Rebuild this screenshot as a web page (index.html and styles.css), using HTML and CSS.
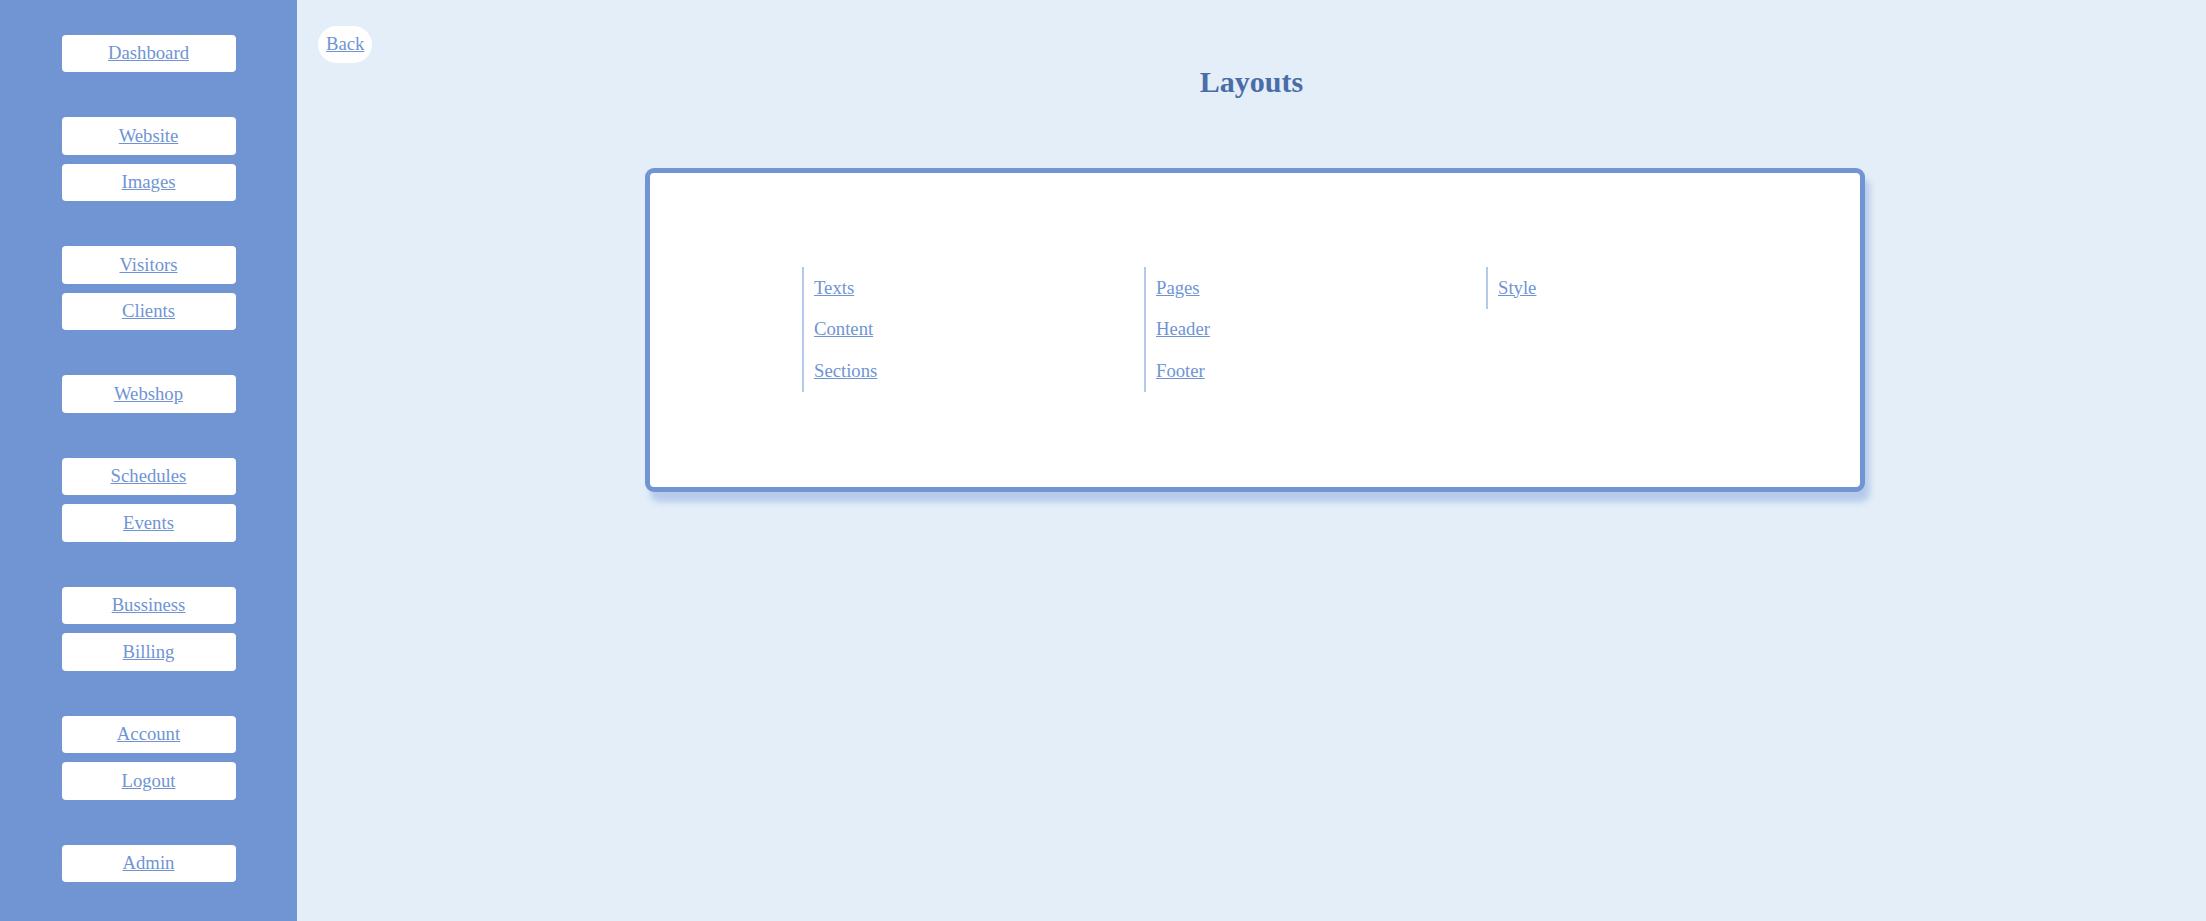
FILE: index.html
```html
<!DOCTYPE html>
<html lang="en">
<head>
<meta charset="utf-8">
<title>Layouts</title>
<link rel="stylesheet" href="styles.css">
</head>
<body>
<nav class="sidebar">
  <div class="group"><a class="nav-btn" href="#">Dashboard</a></div>
  <div class="group"><a class="nav-btn" href="#">Website</a><a class="nav-btn" href="#">Images</a></div>
  <div class="group"><a class="nav-btn" href="#">Visitors</a><a class="nav-btn" href="#">Clients</a></div>
  <div class="group"><a class="nav-btn" href="#">Webshop</a></div>
  <div class="group"><a class="nav-btn" href="#">Schedules</a><a class="nav-btn" href="#">Events</a></div>
  <div class="group"><a class="nav-btn" href="#">Bussiness</a><a class="nav-btn" href="#">Billing</a></div>
  <div class="group"><a class="nav-btn" href="#">Account</a><a class="nav-btn" href="#">Logout</a></div>
  <div class="group"><a class="nav-btn" href="#">Admin</a></div>
</nav>
<main class="main">
  <a class="back" href="#">Back</a>
  <h1 class="title">Layouts</h1>
  <section class="card">
    <div class="columns">
      <ul class="col">
        <li><a href="#">Texts</a></li>
        <li><a href="#">Content</a></li>
        <li><a href="#">Sections</a></li>
      </ul>
      <ul class="col">
        <li><a href="#">Pages</a></li>
        <li><a href="#">Header</a></li>
        <li><a href="#">Footer</a></li>
      </ul>
      <ul class="col">
        <li><a href="#">Style</a></li>
      </ul>
    </div>
  </section>
</main>
</body>
</html>
```
FILE: styles.css
```css
* { box-sizing: border-box; }

html, body {
  margin: 0;
  padding: 0;
  height: 100%;
}

body {
  display: flex;
  min-height: 921px;
  font-family: "Liberation Serif", "Times New Roman", serif;
  font-size: 18.7px;
  line-height: 20.7px;
  background: #e4eef9;
}

a {
  color: #7094d3;
  text-decoration: underline;
}

.sidebar {
  width: 297px;
  flex: 0 0 297px;
  background: #7194d2;
  padding-top: 35px;
  display: flex;
  flex-direction: column;
  align-items: center;
  gap: 45px;
}

.group {
  display: flex;
  flex-direction: column;
  gap: 9px;
}

.nav-btn {
  display: block;
  width: 174px;
  padding: 8.4px 0;
  background: #ffffff;
  border-radius: 4px;
  text-align: center;
}

.main {
  flex: 1;
  display: flex;
  flex-direction: column;
  align-items: flex-start;
  padding: 26px 0 0 0;
}

.back {
  margin-left: 21px;
  display: inline-block;
  background: #ffffff;
  border-radius: 20px;
  padding: 8px 8px;
}

.title {
  align-self: stretch;
  margin: 2.5px 0 0 0;
  text-align: center;
  font-size: 30px;
  font-weight: bold;
  line-height: 34px;
  color: #4a6da8;
}

.card {
  margin-top: 69px;
  margin-left: calc(50% - 606.5px);
  width: 1220px;
  background: #ffffff;
  border: 5px solid #7194d2;
  border-radius: 9px;
  box-shadow: 5px 10px 6px #b6cbea;
  padding: 94px 0 95px 152px;
}

.columns {
  display: grid;
  grid-template-columns: 342px 342px 342px;
  align-items: start;
}

.col {
  list-style: none;
  margin: 0;
  padding: 0 0 0 10px;
  border-left: 2px solid #b5c9ea;
}

.col li {
  padding: 10.4px 0;
}
```
